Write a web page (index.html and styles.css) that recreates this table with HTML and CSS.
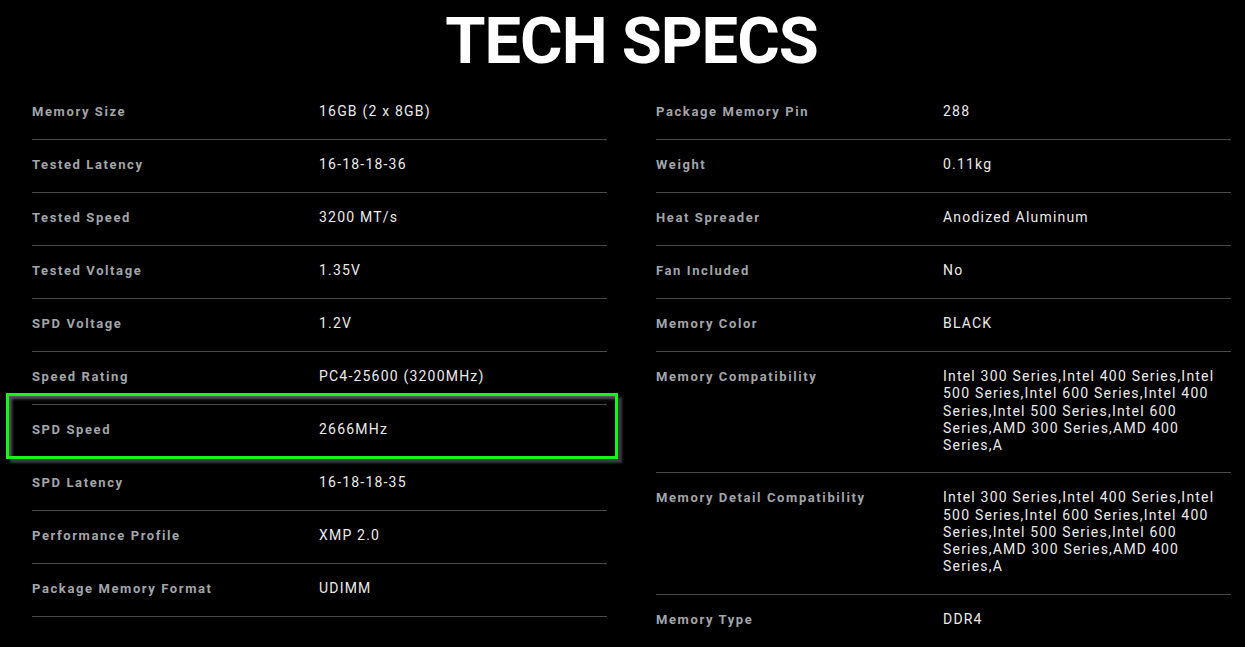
FILE: index.html
```html
<!DOCTYPE html>
<html lang="en">
<head>
  <meta charset="UTF-8" />
  <title>Tech Specs</title>
  <link rel="stylesheet" href="styles.css">
</head>
<body>
  <section class="specs">
    <h1>TECH SPECS</h1>
    <div class="spec-columns">
      <div class="spec-list">
        <div class="spec-row"><span class="spec-label">Memory Size</span><span class="spec-value">16GB (2 x 8GB)</span></div>
        <div class="spec-row"><span class="spec-label">Tested Latency</span><span class="spec-value">16-18-18-36</span></div>
        <div class="spec-row"><span class="spec-label">Tested Speed</span><span class="spec-value">3200 MT/s</span></div>
        <div class="spec-row"><span class="spec-label">Tested Voltage</span><span class="spec-value">1.35V</span></div>
        <div class="spec-row"><span class="spec-label">SPD Voltage</span><span class="spec-value">1.2V</span></div>
        <div class="spec-row"><span class="spec-label">Speed Rating</span><span class="spec-value">PC4-25600 (3200MHz)</span></div>
        <div class="spec-row highlighted"><span class="spec-label">SPD Speed</span><span class="spec-value">2666MHz</span></div>
        <div class="spec-row"><span class="spec-label">SPD Latency</span><span class="spec-value">16-18-18-35</span></div>
        <div class="spec-row"><span class="spec-label">Performance Profile</span><span class="spec-value">XMP 2.0</span></div>
        <div class="spec-row"><span class="spec-label">Package Memory Format</span><span class="spec-value">UDIMM</span></div>
      </div>
      <div class="spec-list">
        <div class="spec-row"><span class="spec-label">Package Memory Pin</span><span class="spec-value">288</span></div>
        <div class="spec-row"><span class="spec-label">Weight</span><span class="spec-value">0.11kg</span></div>
        <div class="spec-row"><span class="spec-label">Heat Spreader</span><span class="spec-value">Anodized Aluminum</span></div>
        <div class="spec-row"><span class="spec-label">Fan Included</span><span class="spec-value">No</span></div>
        <div class="spec-row"><span class="spec-label">Memory Color</span><span class="spec-value">BLACK</span></div>
        <div class="spec-row"><span class="spec-label">Memory Compatibility</span><span class="spec-value">Intel 300 Series,Intel 400 Series,Intel 500 Series,Intel 600 Series,Intel 400 Series,Intel 500 Series,Intel 600 Series,AMD 300 Series,AMD 400 Series,A</span></div>
        <div class="spec-row"><span class="spec-label">Memory Detail Compatibility</span><span class="spec-value">Intel 300 Series,Intel 400 Series,Intel 500 Series,Intel 600 Series,Intel 400 Series,Intel 500 Series,Intel 600 Series,AMD 300 Series,AMD 400 Series,A</span></div>
        <div class="spec-row"><span class="spec-label">Memory Type</span><span class="spec-value">DDR4</span></div>
      </div>
    </div>
  </section>
</body>
</html>
```
FILE: styles.css
```css
body {
  margin: 0;
  background: #000;
  color: #e8e8e8;
  font-family: Roboto, "Liberation Sans", sans-serif;
  overflow: hidden;
}

.specs {
  padding: 0 14px 0 32px;
}

h1 {
  margin: 0;
  padding-top: 5px;
  height: 82px;
  text-align: center;
  font-size: 65px;
  line-height: 72px;
  font-weight: 700;
  letter-spacing: -1px;
  color: #fff;
}

.spec-columns {
  display: grid;
  grid-template-columns: 575px 575px;
  gap: 49px;
}

.spec-row {
  display: grid;
  grid-template-columns: 287px 1fr;
  padding: 16px 0 18px;
  border-bottom: 1px solid #4a4a4a;
  line-height: 18px;
  position: relative;
}

.spec-label {
  font-size: 13px;
  font-weight: 700;
  letter-spacing: 1.6px;
  color: #a2a6aa;
}

.spec-value {
  font-size: 14px;
  letter-spacing: 1.2px;
  color: #ebebeb;
  line-height: 17.25px;
}

.spec-row.highlighted::after {
  content: "";
  position: absolute;
  left: -26px;
  right: -11px;
  top: -12px;
  bottom: -2px;
  border: 3px solid #16f516;
  box-shadow: inset 4px 4px 3px -1px #555, 4px 4px 2px #3a3a3a;
}
```
